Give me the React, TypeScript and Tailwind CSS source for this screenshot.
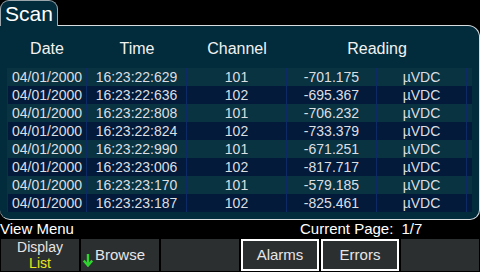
import React from 'react';

interface Row {
  date: string;
  time: string;
  channel: string;
  reading: string;
}

const rows: Row[] = [
  { date: '04/01/2000', time: '16:23:22:629', channel: '101', reading: '-701.175' },
  { date: '04/01/2000', time: '16:23:22:636', channel: '102', reading: '-695.367' },
  { date: '04/01/2000', time: '16:23:22:808', channel: '101', reading: '-706.232' },
  { date: '04/01/2000', time: '16:23:22:824', channel: '102', reading: '-733.379' },
  { date: '04/01/2000', time: '16:23:22:990', channel: '101', reading: '-671.251' },
  { date: '04/01/2000', time: '16:23:23:006', channel: '102', reading: '-817.717' },
  { date: '04/01/2000', time: '16:23:23:170', channel: '101', reading: '-579.185' },
  { date: '04/01/2000', time: '16:23:23:187', channel: '102', reading: '-825.461' },
];

function DownArrow() {
  return (
    <svg width="10" height="13" viewBox="0 0 10 13" className="absolute left-[2px] top-[15px]">
      <path d="M5 0 V11" stroke="#2fd42f" strokeWidth="2.4" />
      <path d="M0.8 6.5 L5 11.5 L9.2 6.5" stroke="#2fd42f" strokeWidth="2.4" fill="none" />
    </svg>
  );
}

function SoftKey({ children, outlined }: { children?: React.ReactNode; outlined?: boolean }) {
  return (
    <div
      className={`relative w-[78px] h-[32px] bg-[#2c2f30] flex flex-col items-center justify-center text-[14px] leading-[16px] text-[#e6e6e6] ${
        outlined ? 'border-2 border-white' : ''
      }`}
    >
      {children}
    </div>
  );
}

export default function App() {
  return (
    <div
      className="w-[480px] h-[272px] bg-black flex flex-col overflow-hidden"
      style={{ fontFamily: '"Liberation Sans", Arial, sans-serif' }}
    >
      <div className="flex h-[26px] shrink-0">
        <div className="relative z-10 w-[58px] h-[26px] rounded-t-[9px] border border-b-0 border-[#9aa6ab] bg-[#022b3c] text-white text-[21px] leading-[24px] pl-[4px] pt-[1px]">
          Scan
        </div>
      </div>
      <div className="-mt-px h-[195px] shrink-0 bg-[#022b3c] border-t border-r border-b border-[#d8dde0] rounded-tr-[12px] rounded-b-[10px] px-[7px]">
        <div className="flex h-[42px] items-center text-[#f2f2f2] text-[16px] pt-[3px]">
          <div className="w-[80px] text-center">Date</div>
          <div className="w-[100px] text-center">Time</div>
          <div className="w-[100px] text-center">Channel</div>
          <div className="w-[180px] text-center">Reading</div>
        </div>
        <div className="flex flex-col">
          {rows.map((r, i) => (
            <div
              key={i}
              className={`flex h-[18px] items-center text-[14px] text-[#dcdfe2] ${
                i % 2 === 0 ? 'bg-[#0a3341]' : 'bg-[#041a3a]'
              }`}
            >
              <div className="w-[80px] h-full flex items-center justify-center border-l border-r border-[#0c2a66]">{r.date}</div>
              <div className="w-[100px] h-full flex items-center justify-center border-r border-[#0c2a66]">{r.time}</div>
              <div className="w-[100px] h-full flex items-center justify-center border-r border-[#0c2a66]">{r.channel}</div>
              <div className="w-[90px] h-full flex items-center justify-center border-r border-[#0c2a66]">{r.reading}</div>
              <div className="w-[90px] h-full flex items-center justify-center border-r border-[#0c2a66]">µVDC</div>
            </div>
          ))}
        </div>
      </div>
      <div className="flex h-[18px] items-center text-[15px] text-white leading-[18px]">
        <div className="w-[300px]">View Menu</div>
        <div className="flex gap-[8px]">
          <span>Current Page:</span>
          <span>1/7</span>
        </div>
      </div>
      <div className="flex gap-[2px] pl-[1px] pt-[1px]">
        <SoftKey>
          <span>Display</span>
          <span className="text-[#e8e81a]">List</span>
        </SoftKey>
        <SoftKey>
          <DownArrow />
          <span className="text-[15px]">Browse</span>
        </SoftKey>
        <SoftKey />
        <SoftKey outlined>
          <span className="text-[15px]">Alarms</span>
        </SoftKey>
        <SoftKey outlined>
          <span className="text-[15px]">Errors</span>
        </SoftKey>
        <SoftKey />
      </div>
    </div>
  );
}
